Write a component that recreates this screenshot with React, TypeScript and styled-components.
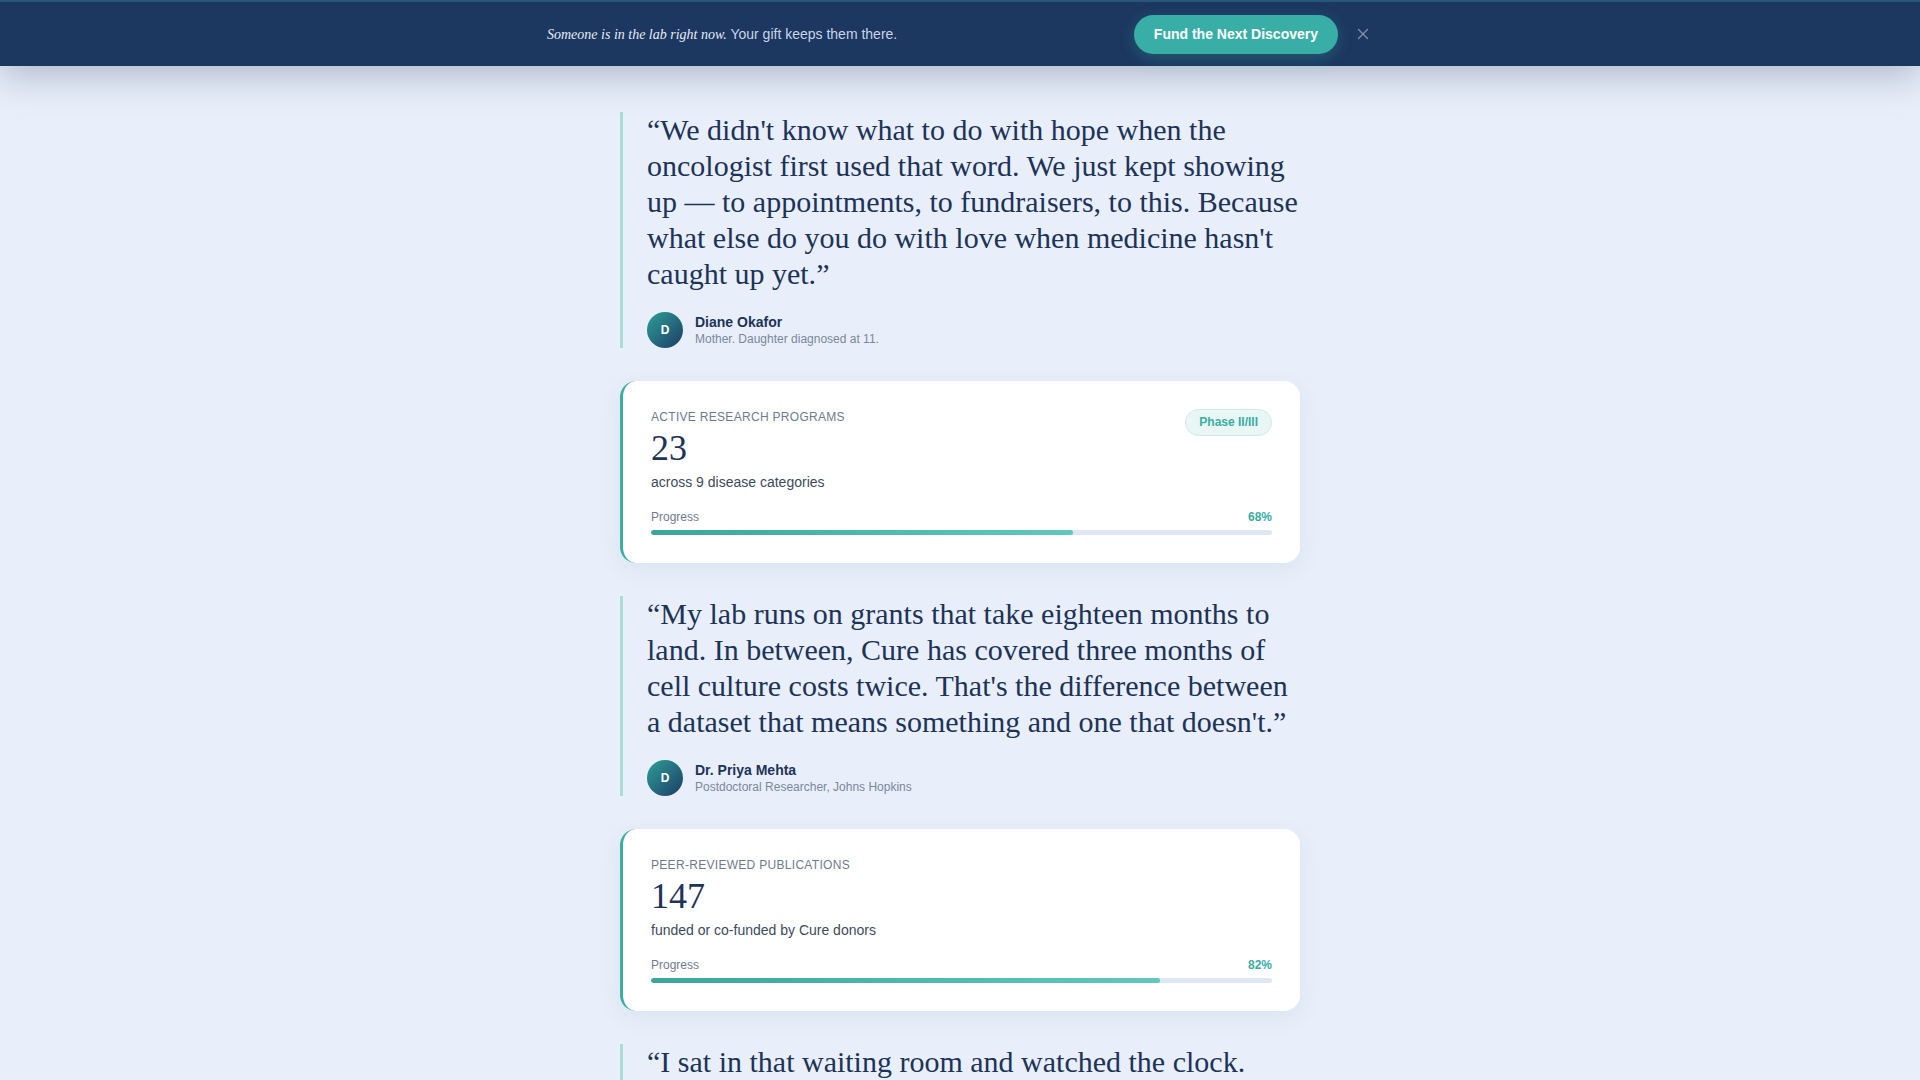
import styled, { createGlobalStyle } from "styled-components";

const GlobalStyle = createGlobalStyle`
    html, body {
        margin: 0;
        padding: 0;
        background: #e8effa;
        font-family: "Liberation Sans", Arial, sans-serif;
        color: #1d3358;
    }
    * {
        box-sizing: border-box;
    }
`;

interface Testimonial {
    kind: "quote";
    text: string;
    name: string;
    role: string;
}

interface Stat {
    kind: "stat";
    label: string;
    value: string;
    detail: string;
    progress: number;
    badge?: string;
}

type Block = Testimonial | Stat;

const blocks: Block[] = [
    {
        kind: "quote",
        text: "We didn't know what to do with hope when the oncologist first used that word. We just kept showing up — to appointments, to fundraisers, to this. Because what else do you do with love when medicine hasn't caught up yet.",
        name: "Diane Okafor",
        role: "Mother. Daughter diagnosed at 11.",
    },
    {
        kind: "stat",
        label: "Active Research Programs",
        value: "23",
        detail: "across 9 disease categories",
        progress: 68,
        badge: "Phase II/III",
    },
    {
        kind: "quote",
        text: "My lab runs on grants that take eighteen months to land. In between, Cure has covered three months of cell culture costs twice. That's the difference between a dataset that means something and one that doesn't.",
        name: "Dr. Priya Mehta",
        role: "Postdoctoral Researcher, Johns Hopkins",
    },
    {
        kind: "stat",
        label: "Peer-Reviewed Publications",
        value: "147",
        detail: "funded or co-funded by Cure donors",
        progress: 82,
    },
    {
        kind: "quote",
        text: "I sat in that waiting room and watched the clock. Every minute felt like something we could not get back, and every study we read gave us a little more of it.",
        name: "Marcus Bell",
        role: "Father. Son in remission since 2021.",
    },
];

const TopBar = () => (
    <Bar>
        <BarInner>
            <BarText>
                <em>Someone is in the lab right now.</em> Your gift keeps them there.
            </BarText>
            <BarActions>
                <FundButton>Fund the Next Discovery</FundButton>
                <CloseButton aria-label="Close">
                    <svg width="12" height="12" viewBox="0 0 12 12">
                        <path d="M1.5 1.5l9 9M10.5 1.5l-9 9" stroke="currentColor" strokeWidth="1.3" strokeLinecap="round" />
                    </svg>
                </CloseButton>
            </BarActions>
        </BarInner>
    </Bar>
);

const QuoteBlock = ({ item }: { item: Testimonial }) => (
    <Quote>
        <QuoteText>“{item.text}”</QuoteText>
        <Attribution>
            <Avatar>{item.name.charAt(0)}</Avatar>
            <div>
                <PersonName>{item.name}</PersonName>
                <PersonRole>{item.role}</PersonRole>
            </div>
        </Attribution>
    </Quote>
);

const StatCard = ({ item }: { item: Stat }) => (
    <Card>
        <CardHead>
            <div>
                <StatLabel>{item.label}</StatLabel>
                <StatValue>{item.value}</StatValue>
                <StatDetail>{item.detail}</StatDetail>
            </div>
            {item.badge && <Badge>{item.badge}</Badge>}
        </CardHead>
        <ProgressRow>
            <span>Progress</span>
            <Percent>{item.progress}%</Percent>
        </ProgressRow>
        <Track>
            <Fill style={{ width: `${item.progress}%` }} />
        </Track>
    </Card>
);

export default function App() {
    return <>
        <GlobalStyle />
        <TopBar />
        <Column>
            {blocks.map((b, i) => b.kind === "quote"
                ? <QuoteBlock key={i} item={b} />
                : <StatCard key={i} item={b} />)}
        </Column>
    </>;
}

const Bar = styled.header`
    position: relative;
    z-index: 2;
    height: 66px;
    background: #1c3760;
    border-top: 2px solid #27587c;
    box-shadow: 0 10px 36px rgba(28, 48, 84, 0.28);
    display: flex;
    align-items: center;
`;

const BarInner = styled.div`
    width: 826px;
    margin: 0 auto;
    display: flex;
    align-items: center;
    justify-content: space-between;
`;

const BarText = styled.p`
    margin: 0;
    font-size: 14px;
    color: #c9d5e8;

    em {
        font-family: "Liberation Serif", "Times New Roman", serif;
        font-style: italic;
        color: #e6edf7;
    }
`;

const BarActions = styled.div`
    display: flex;
    align-items: center;
    gap: 15px;
`;

const FundButton = styled.button`
    height: 39px;
    padding: 0 20px;
    border: none;
    border-radius: 999px;
    background: #39aea6;
    color: #fff;
    font-family: "Liberation Sans", Arial, sans-serif;
    font-weight: 700;
    font-size: 14px;
    cursor: pointer;
    box-shadow: 0 4px 16px rgba(57, 174, 166, 0.3);
`;

const CloseButton = styled.button`
    display: flex;
    align-items: center;
    justify-content: center;
    width: 20px;
    height: 20px;
    padding: 0;
    border: none;
    background: none;
    color: #7f92b0;
    cursor: pointer;
`;

const Column = styled.main`
    width: 680px;
    margin: 0 auto;
    padding: 46px 0 60px;
    display: flex;
    flex-direction: column;
    gap: 33px;
`;

const Quote = styled.blockquote`
    margin: 0;
    border-left: 3px solid #a9ddd6;
    padding-left: 24px;
`;

const QuoteText = styled.p`
    margin: 0;
    font-family: "Liberation Serif", "Times New Roman", serif;
    font-size: 30px;
    line-height: 36px;
    color: #1d3358;
`;

const Attribution = styled.div`
    display: flex;
    align-items: center;
    gap: 12px;
    margin-top: 20px;
`;

const Avatar = styled.div`
    width: 36px;
    height: 36px;
    border-radius: 50%;
    background: linear-gradient(135deg, #2d9f98 0%, #1e3c66 100%);
    color: #fff;
    font-size: 12px;
    font-weight: 700;
    display: flex;
    align-items: center;
    justify-content: center;
`;

const PersonName = styled.div`
    font-size: 14px;
    font-weight: 700;
    line-height: 18px;
    color: #1d3358;
`;

const PersonRole = styled.div`
    font-size: 12px;
    line-height: 16px;
    color: #7a879b;
`;

const Card = styled.section`
    background: #fff;
    border-radius: 16px;
    border-left: 3px solid #3aaea5;
    padding: 28px;
    box-shadow: 0 6px 24px rgba(40, 70, 120, 0.07);
`;

const CardHead = styled.div`
    display: flex;
    justify-content: space-between;
    align-items: flex-start;
`;

const StatLabel = styled.div`
    font-size: 12px;
    line-height: 16px;
    letter-spacing: 0.3px;
    text-transform: uppercase;
    color: #6e7b8f;
`;

const StatValue = styled.div`
    margin-top: 3px;
    font-family: "Liberation Serif", "Times New Roman", serif;
    font-size: 36px;
    line-height: 40px;
    color: #1d3358;
`;

const StatDetail = styled.div`
    margin-top: 4px;
    font-size: 14px;
    line-height: 20px;
    color: #3e4a5c;
`;

const Badge = styled.span`
    padding: 6px 13px;
    border-radius: 999px;
    background: #e8f6f4;
    border: 1px solid #cfebe6;
    color: #3aaea5;
    font-size: 12px;
    font-weight: 700;
    line-height: 13px;
`;

const ProgressRow = styled.div`
    margin-top: 18px;
    display: flex;
    justify-content: space-between;
    font-size: 12px;
    line-height: 14px;
    color: #6e7b8f;
`;

const Percent = styled.span`
    font-size: 12px;
    font-weight: 700;
    color: #3aaea5;
`;

const Track = styled.div`
    margin-top: 6px;
    height: 5px;
    border-radius: 3px;
    background: #dfe6f4;
    overflow: hidden;
`;

const Fill = styled.div`
    height: 100%;
    border-radius: 3px;
    background: linear-gradient(90deg, #3aa59d 0%, #62c8bd 100%);
`;
